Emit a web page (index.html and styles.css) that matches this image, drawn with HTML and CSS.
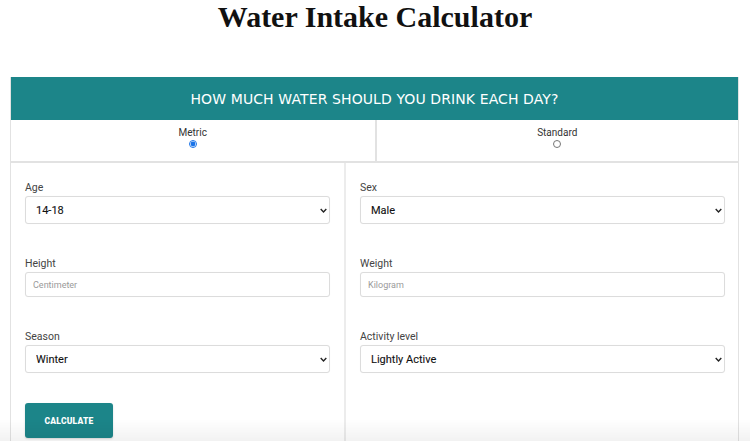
FILE: index.html
```html
<!DOCTYPE html>
<html lang="en">
<head>
<meta charset="utf-8">
<title>Water Intake Calculator</title>
<link rel="stylesheet" href="styles.css">
</head>
<body>
<h1 class="page-title">Water Intake Calculator</h1>
<section class="calc">
  <div class="calc-head">HOW MUCH WATER SHOULD YOU DRINK EACH DAY?</div>
  <div class="unit-row">
    <label class="unit">Metric<input type="radio" name="unit" checked></label>
    <label class="unit">Standard<input type="radio" name="unit"></label>
  </div>
  <div class="fields">
    <div class="col col-left">
      <div class="field">
        <label class="field-label">Age</label>
        <div class="select-wrap">
          <select class="control"><option>14-18</option></select>
          <svg class="chev" viewBox="0 0 10 6" width="7" height="5"><path d="M1 1l4 4 4-4" fill="none" stroke="#222" stroke-width="2"/></svg>
        </div>
      </div>
      <div class="field">
        <label class="field-label">Height</label>
        <input class="control text" type="text" placeholder="Centimeter">
      </div>
      <div class="field">
        <label class="field-label">Season</label>
        <div class="select-wrap">
          <select class="control"><option>Winter</option></select>
          <svg class="chev" viewBox="0 0 10 6" width="7" height="5"><path d="M1 1l4 4 4-4" fill="none" stroke="#222" stroke-width="2"/></svg>
        </div>
      </div>
      <button class="btn" type="button">CALCULATE</button>
    </div>
    <div class="col col-right">
      <div class="field">
        <label class="field-label">Sex</label>
        <div class="select-wrap">
          <select class="control"><option>Male</option></select>
          <svg class="chev" viewBox="0 0 10 6" width="7" height="5"><path d="M1 1l4 4 4-4" fill="none" stroke="#222" stroke-width="2"/></svg>
        </div>
      </div>
      <div class="field">
        <label class="field-label">Weight</label>
        <input class="control text" type="text" placeholder="Kilogram">
      </div>
      <div class="field">
        <label class="field-label">Activity level</label>
        <div class="select-wrap">
          <select class="control"><option>Lightly Active</option></select>
          <svg class="chev" viewBox="0 0 10 6" width="7" height="5"><path d="M1 1l4 4 4-4" fill="none" stroke="#222" stroke-width="2"/></svg>
        </div>
      </div>
    </div>
  </div>
</section>
<div class="fade"></div>
</body>
</html>
```
FILE: styles.css
```css
html, body {
  margin: 0;
  padding: 0;
  background: #fff;
  height: 441px;
  overflow: hidden;
}
body {
  font-family: Roboto, "Liberation Sans", sans-serif;
  color: #222;
}
.page-title {
  margin: 0;
  height: 77px;
  box-sizing: border-box;
  padding-top: 1px;
  text-align: center;
  font-family: "Liberation Serif", "DejaVu Serif", serif;
  font-weight: 700;
  font-size: 30px;
  line-height: 32px;
  color: #111;
}
.calc {
  margin: 0 11px 0 10px;
  border: 1px solid #e2e2e2;
  border-top: 0;
  border-bottom: 0;
}
.calc-head {
  height: 43px;
  background: #1c8589;
  color: #fff;
  font-family: "DejaVu Sans", Verdana, sans-serif;
  font-size: 14px;
  display: flex;
  align-items: center;
  justify-content: center;
  letter-spacing: 0.1px;
}
.unit-row {
  display: grid;
  grid-template-columns: 1fr 1fr;
  height: 43px;
  border-bottom: 2px solid #e2e2e2;
  box-sizing: border-box;
}
.unit {
  display: flex;
  flex-direction: column;
  align-items: center;
  padding-top: 7px;
  font-size: 10px;
  color: #333;
  line-height: 12px;
}
.unit + .unit {
  border-left: 2px solid #e2e2e2;
}
.unit input {
  margin: 1px 0 0;
  width: 8px;
  height: 8px;
  accent-color: #1a73e8;
}
.fields {
  display: grid;
  grid-template-columns: 335px 1fr;
  height: 280px;
}
.col {
  padding: 18px 14px 0 14px;
}
.col-right {
  padding-right: 13px;
}
.col-left {
  border-right: 2px solid #ececec;
}
.field {
  margin-bottom: 33px;
}
.field-label {
  display: block;
  font-size: 10.5px;
  line-height: 14px;
  color: #444;
  margin-bottom: 1px;
}
.select-wrap {
  position: relative;
}
.control {
  display: block;
  width: 100%;
  box-sizing: border-box;
  height: 28px;
  border: 1px solid #dcdcdc;
  border-radius: 3px;
  background: #fff;
  padding: 0 9px 0 10px;
  font-family: Roboto, "Liberation Sans", sans-serif;
  font-weight: 400;
  font-size: 11px;
  color: #111;
  -webkit-text-stroke: 0.1px #111;
  appearance: none;
  -webkit-appearance: none;
  outline: none;
  box-shadow: 0 0 1px rgba(0,0,0,0.05);
}
.control.text {
  height: 25px;
  font-size: 9px;
  padding-left: 7px;
  -webkit-text-stroke: 0;
}
.control.text::placeholder {
  color: #9a9a9a;
}
.chev {
  position: absolute;
  right: 3px;
  top: 12px;
  pointer-events: none;
}
.btn {
  display: block;
  width: 88px;
  height: 35px;
  margin-top: -3px;
  border: 0;
  border-radius: 3px;
  background: #1c8589;
  color: #fff;
  font-family: Roboto, "Liberation Sans", sans-serif;
  font-weight: 900;
  font-size: 8.5px;
  letter-spacing: 0.2px;
  box-shadow: 0 1px 2px rgba(0,0,0,0.15);
}
.fade {
  position: fixed;
  left: 0;
  right: 0;
  bottom: 0;
  height: 22px;
  background: linear-gradient(rgba(0,0,0,0), rgba(0,0,0,0.05));
  pointer-events: none;
}
```
